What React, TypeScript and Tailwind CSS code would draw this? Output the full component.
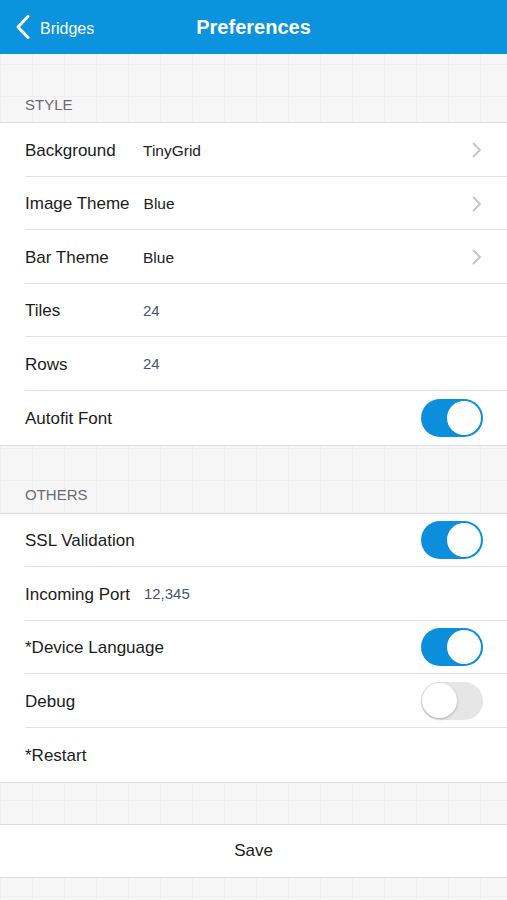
import React from "react";

const font = { fontFamily: '"Liberation Sans", Arial, sans-serif' };

function Chevron() {
  return (
    <svg width="10" height="16" viewBox="0 0 10 16" className="shrink-0">
      <path d="M1.5 1.5 L8 8 L1.5 14.5" fill="none" stroke="#c4c4c9" strokeWidth="1.8" strokeLinecap="round" strokeLinejoin="round" />
    </svg>
  );
}

function Toggle({ on }: { on: boolean }) {
  return on ? (
    <div className="w-[62px] h-[38px] rounded-full bg-[#0b8fdc] flex items-center justify-end pr-[2px] shrink-0">
      <div className="w-[34px] h-[34px] rounded-full bg-white" />
    </div>
  ) : (
    <div className="w-[62px] h-[38px] rounded-full bg-[#e6e6e6] flex items-center justify-start pl-[1px] shrink-0">
      <div className="w-[35px] h-[35px] rounded-full bg-white shadow-[0_1px_3px_rgba(0,0,0,0.25)]" />
    </div>
  );
}

type Row = { label: string; value?: string; num?: boolean; chevron?: boolean; toggle?: boolean | null };

function RowItem({ r, last }: { r: Row; last: boolean }) {
  return (
    <div className="h-[53.6px] pl-[25px] bg-white">
      <div className={`h-full flex items-center pr-[24px] ${last ? "" : "border-b border-[#e3e3e5]"}`}>
        <div className="min-w-[104px] mr-[14px] text-[17px] text-[#1c1c1c] whitespace-nowrap pt-[2px]">{r.label}</div>
        <div className={`flex-1 pt-[2px] ${r.num ? "text-[15px] text-[#4a5572]" : "text-[15.5px] text-[#222]"}`}>{r.value}</div>
        {r.chevron && <div className="pr-[1px] pt-[2px]"><Chevron /></div>}
        {r.toggle !== undefined && r.toggle !== null && <Toggle on={r.toggle} />}
      </div>
    </div>
  );
}

function Section({ rows }: { rows: Row[] }) {
  return (
    <div className="border-y border-[#dedee0] bg-white">
      {rows.map((r, i) => (
        <RowItem key={r.label} r={r} last={i === rows.length - 1} />
      ))}
    </div>
  );
}

export default function App() {
  const style: Row[] = [
    { label: "Background", value: "TinyGrid", chevron: true },
    { label: "Image Theme", value: "Blue", chevron: true },
    { label: "Bar Theme", value: "Blue", chevron: true },
    { label: "Tiles", value: "24", num: true },
    { label: "Rows", value: "24", num: true },
    { label: "Autofit Font", toggle: true },
  ];
  const others: Row[] = [
    { label: "SSL Validation", toggle: true },
    { label: "Incoming Port", value: "12,345", num: true },
    { label: "*Device Language", toggle: true },
    { label: "Debug", toggle: false },
    { label: "*Restart" },
  ];
  return (
    <div
      style={font}
      className="w-[507px] h-[900px] overflow-hidden bg-[#f6f6f6] bg-[linear-gradient(to_right,#efefef_1px,transparent_1px),linear-gradient(to_bottom,#efefef_1px,transparent_1px)] bg-[size:32px_32px]"
    >
      <div className="h-[54px] bg-[#0b93de] flex items-center relative">
        <div className="flex items-center pl-[15px] gap-[9px]">
          <svg width="16" height="26" viewBox="0 0 16 26">
            <path d="M13 2.5 L3 13 L13 23.5" fill="none" stroke="white" strokeWidth="3" strokeLinecap="round" strokeLinejoin="round" />
          </svg>
          <span className="text-[16px] text-white mt-[3px]">Bridges</span>
        </div>
        <div className="absolute left-0 right-0 top-0 h-full flex items-center justify-center pointer-events-none">
          <span className="text-[20px] font-bold text-white">Preferences</span>
        </div>
      </div>
      <div className="h-[68px] flex items-end pb-[8px] pl-[25px]">
        <div className="text-[15px] leading-[18px] text-[#6b6b70]">STYLE</div>
      </div>
      <Section rows={style} />
      <div className="h-[67px] flex items-end pb-[9px] pl-[25px]">
        <div className="text-[15px] leading-[18px] text-[#6b6b70]">OTHERS</div>
      </div>
      <Section rows={others} />
      <div className="h-[41px]" />
      <div className="h-[54px] border-y border-[#dedee0] bg-white flex items-center justify-center">
        <span className="text-[17px] text-[#1c1c1c]">Save</span>
      </div>
    </div>
  );
}
